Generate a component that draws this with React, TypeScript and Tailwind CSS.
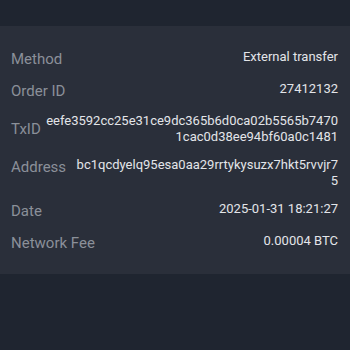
const rows = [
  { label: "Method", value: "External transfer" },
  { label: "Order ID", value: "27412132" },
  {
    label: "TxID",
    value: "eefe3592cc25e31ce9dc365b6d0ca02b5565b74701cac0d38ee94bf60a0c1481",
    center: true,
  },
  { label: "Address", value: "bc1qcdyelq95esa0aa29rrtykysuzx7hkt5rvvjr75" },
  { label: "Date", value: "2025-01-31 18:21:27" },
  { label: "Network Fee", value: "0.00004 BTC" },
];

export default function App() {
  return (
    <div
      className="w-[350px] h-[350px] bg-[#1f2530] pt-[26px]"
      style={{ fontFamily: "Roboto, 'Liberation Sans', sans-serif" }}
    >
      <div className="bg-[#2a2f3a] pl-[11px] pr-[12px] pt-[23px] pb-[21px] flex flex-col gap-3">
        {rows.map((r) => (
          <div
            key={r.label}
            className={`flex justify-between gap-[4px] ${r.center ? "items-center" : "items-start"}`}
          >
            <span className="shrink-0 text-[15px] leading-[20px] text-[#8b9099]">
              {r.label}
            </span>
            <span className="min-w-0 text-right break-all text-[13px] leading-[16px] text-[#e3e5e9]">
              {r.value}
            </span>
          </div>
        ))}
      </div>
    </div>
  );
}
